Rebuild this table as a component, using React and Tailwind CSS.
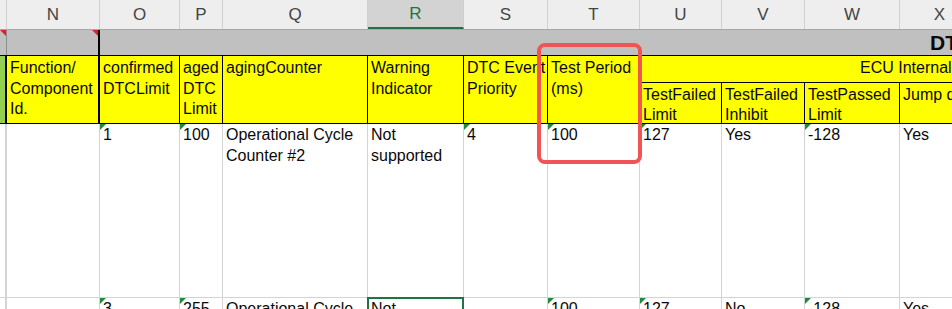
import React from "react";

const W = { M: 7, N: 93, O: 80, P: 43, Q: 145, R: 96, S: 84, T: 92, U: 82, V: 83, W: 95, X: 80 };

function GreenTri() {
  return (
    <div className="absolute top-0 left-0 w-0 h-0 border-t-[6px] border-t-[#1f8b3b] border-r-[6px] border-r-transparent" />
  );
}
function RedTri() {
  return (
    <div className="absolute top-0 right-0 w-0 h-0 border-t-[6px] border-t-[#e02020] border-l-[6px] border-l-transparent" />
  );
}

function Cell({ w, tri, children, extra = "" }) {
  return (
    <div
      className={`relative shrink-0 h-full border-r border-[#d4d4d4] pl-[3px] pt-0 leading-[21px] ${extra}`}
      style={{ width: w }}
    >
      {tri && <GreenTri />}
      {children}
    </div>
  );
}

function YCell({ w, children, extra = "" }) {
  return (
    <div
      className={`shrink-0 h-full border-r border-black pl-[3px] pt-[2px] leading-[20.5px] overflow-hidden whitespace-nowrap ${extra}`}
      style={{ width: w }}
    >
      {children}
    </div>
  );
}

export default function App() {
  const letters = ["N", "O", "P", "Q", "R", "S", "T", "U", "V", "W", "X"];
  return (
    <div
      className="relative w-[952px] h-[309px] overflow-hidden bg-white text-[16px] text-[#0a0a0a]"
      style={{ fontFamily: '"Liberation Sans", Arial, sans-serif' }}
    >
      {/* Column letters */}
      <div className="flex h-[30px] bg-[#eeeeee] border-b border-[#a8a8a8] text-[#444] text-[17px]">
        <div className="shrink-0 h-full border-r border-[#d0d0d0]" style={{ width: W.M }} />
        {letters.map((l) => (
          <div
            key={l}
            className={`shrink-0 h-full border-r border-[#d0d0d0] flex items-center justify-center ${
              l === "R" ? "bg-[#d3d3d3] text-[#217346] border-b-2 border-b-[#217346]" : ""
            }`}
            style={{ width: W[l] }}
          >
            {l}
          </div>
        ))}
      </div>

      {/* Gray band */}
      <div className="flex h-[26px] bg-[#c0c0c0] border-b border-black">
        <div className="relative shrink-0 h-full border-r border-[#8c8c8c]" style={{ width: W.M }}>
          <RedTri />
        </div>
        <div className="relative shrink-0 h-full border-r-2 border-black" style={{ width: W.N }}>
          <RedTri />
        </div>
        <div className="flex-1 h-full pl-[830px] font-bold text-[21px] leading-[26px] whitespace-nowrap overflow-hidden">
          DTC Debounce
        </div>
      </div>

      {/* Yellow header */}
      <div className="flex h-[68px] bg-[#ffff00] border-b border-black">
        <div className="shrink-0 h-full bg-[#92d050] border-r-2 border-black" style={{ width: W.M }} />
        <YCell w={W.N} extra="border-r-2">
          <div>Function/</div>
          <div>Component</div>
          <div>Id.</div>
        </YCell>
        <YCell w={W.O}>
          <div>confirmed</div>
          <div>DTCLimit</div>
        </YCell>
        <YCell w={W.P}>
          <div>aged</div>
          <div>DTC</div>
          <div>Limit</div>
        </YCell>
        <YCell w={W.Q}>
          <div>agingCounter</div>
        </YCell>
        <YCell w={W.R}>
          <div>Warning</div>
          <div>Indicator</div>
        </YCell>
        <YCell w={W.S}>
          <div>DTC Event</div>
          <div>Priority</div>
        </YCell>
        <YCell w={W.T}>
          <div>Test Period</div>
          <div>(ms)</div>
        </YCell>
        <div className="flex flex-col shrink-0 h-full" style={{ width: W.U + W.V + W.W + W.X }}>
          <div className="h-[27px] border-b border-black pl-[220px] pt-[2px] leading-[20.5px] whitespace-nowrap overflow-hidden">
            ECU Internal Debounce
          </div>
          <div className="flex flex-1 min-h-0">
            <YCell w={W.U} extra="pt-0 leading-[20px]">
              <div>TestFailed</div>
              <div>Limit</div>
            </YCell>
            <YCell w={W.V} extra="pt-0 leading-[20px]">
              <div>TestFailed</div>
              <div>Inhibit</div>
            </YCell>
            <YCell w={W.W} extra="pt-0 leading-[20px]">
              <div>TestPassed</div>
              <div>Limit</div>
            </YCell>
            <YCell w={W.X} extra="pt-0 leading-[20px]">
              <div>Jump down</div>
            </YCell>
          </div>
        </div>
      </div>

      {/* Data row 1 */}
      <div className="flex h-[174px] border-b border-[#d4d4d4] overflow-hidden">
        <Cell w={W.M} extra="border-r-2 border-[#c4c4c4]" />
        <Cell w={W.N} />
        <Cell w={W.O} tri>1</Cell>
        <Cell w={W.P} tri>100</Cell>
        <Cell w={W.Q}>
          <div>Operational Cycle</div>
          <div>Counter #2</div>
        </Cell>
        <Cell w={W.R}>
          <div>Not</div>
          <div>supported</div>
        </Cell>
        <Cell w={W.S} tri>4</Cell>
        <Cell w={W.T} tri>100</Cell>
        <Cell w={W.U} tri>127</Cell>
        <Cell w={W.V}>Yes</Cell>
        <Cell w={W.W} tri>-128</Cell>
        <Cell w={W.X}>Yes</Cell>
      </div>

      {/* Data row 2 */}
      <div className="flex h-[174px]">
        <Cell w={W.M} extra="border-r-2 border-[#c4c4c4]" />
        <Cell w={W.N} />
        <Cell w={W.O} tri>3</Cell>
        <Cell w={W.P} tri>255</Cell>
        <Cell w={W.Q}>
          <div>Operational Cycle</div>
          <div>Counter #2</div>
        </Cell>
        <Cell w={W.R}>
          <div className="absolute -top-[1px] -left-[1px] -right-[1px] bottom-0 border-2 border-[#217346]" />
          <div>Not</div>
          <div>supported</div>
        </Cell>
        <Cell w={W.S} />
        <Cell w={W.T} tri>100</Cell>
        <Cell w={W.U} tri>127</Cell>
        <Cell w={W.V}>No</Cell>
        <Cell w={W.W} tri>-128</Cell>
        <Cell w={W.X}>Yes</Cell>
      </div>

      {/* Red annotation box */}
      <div className="absolute left-[537px] top-[43px] w-[105px] h-[121px] border-4 border-[#f25454] rounded-[8px]" />
    </div>
  );
}
